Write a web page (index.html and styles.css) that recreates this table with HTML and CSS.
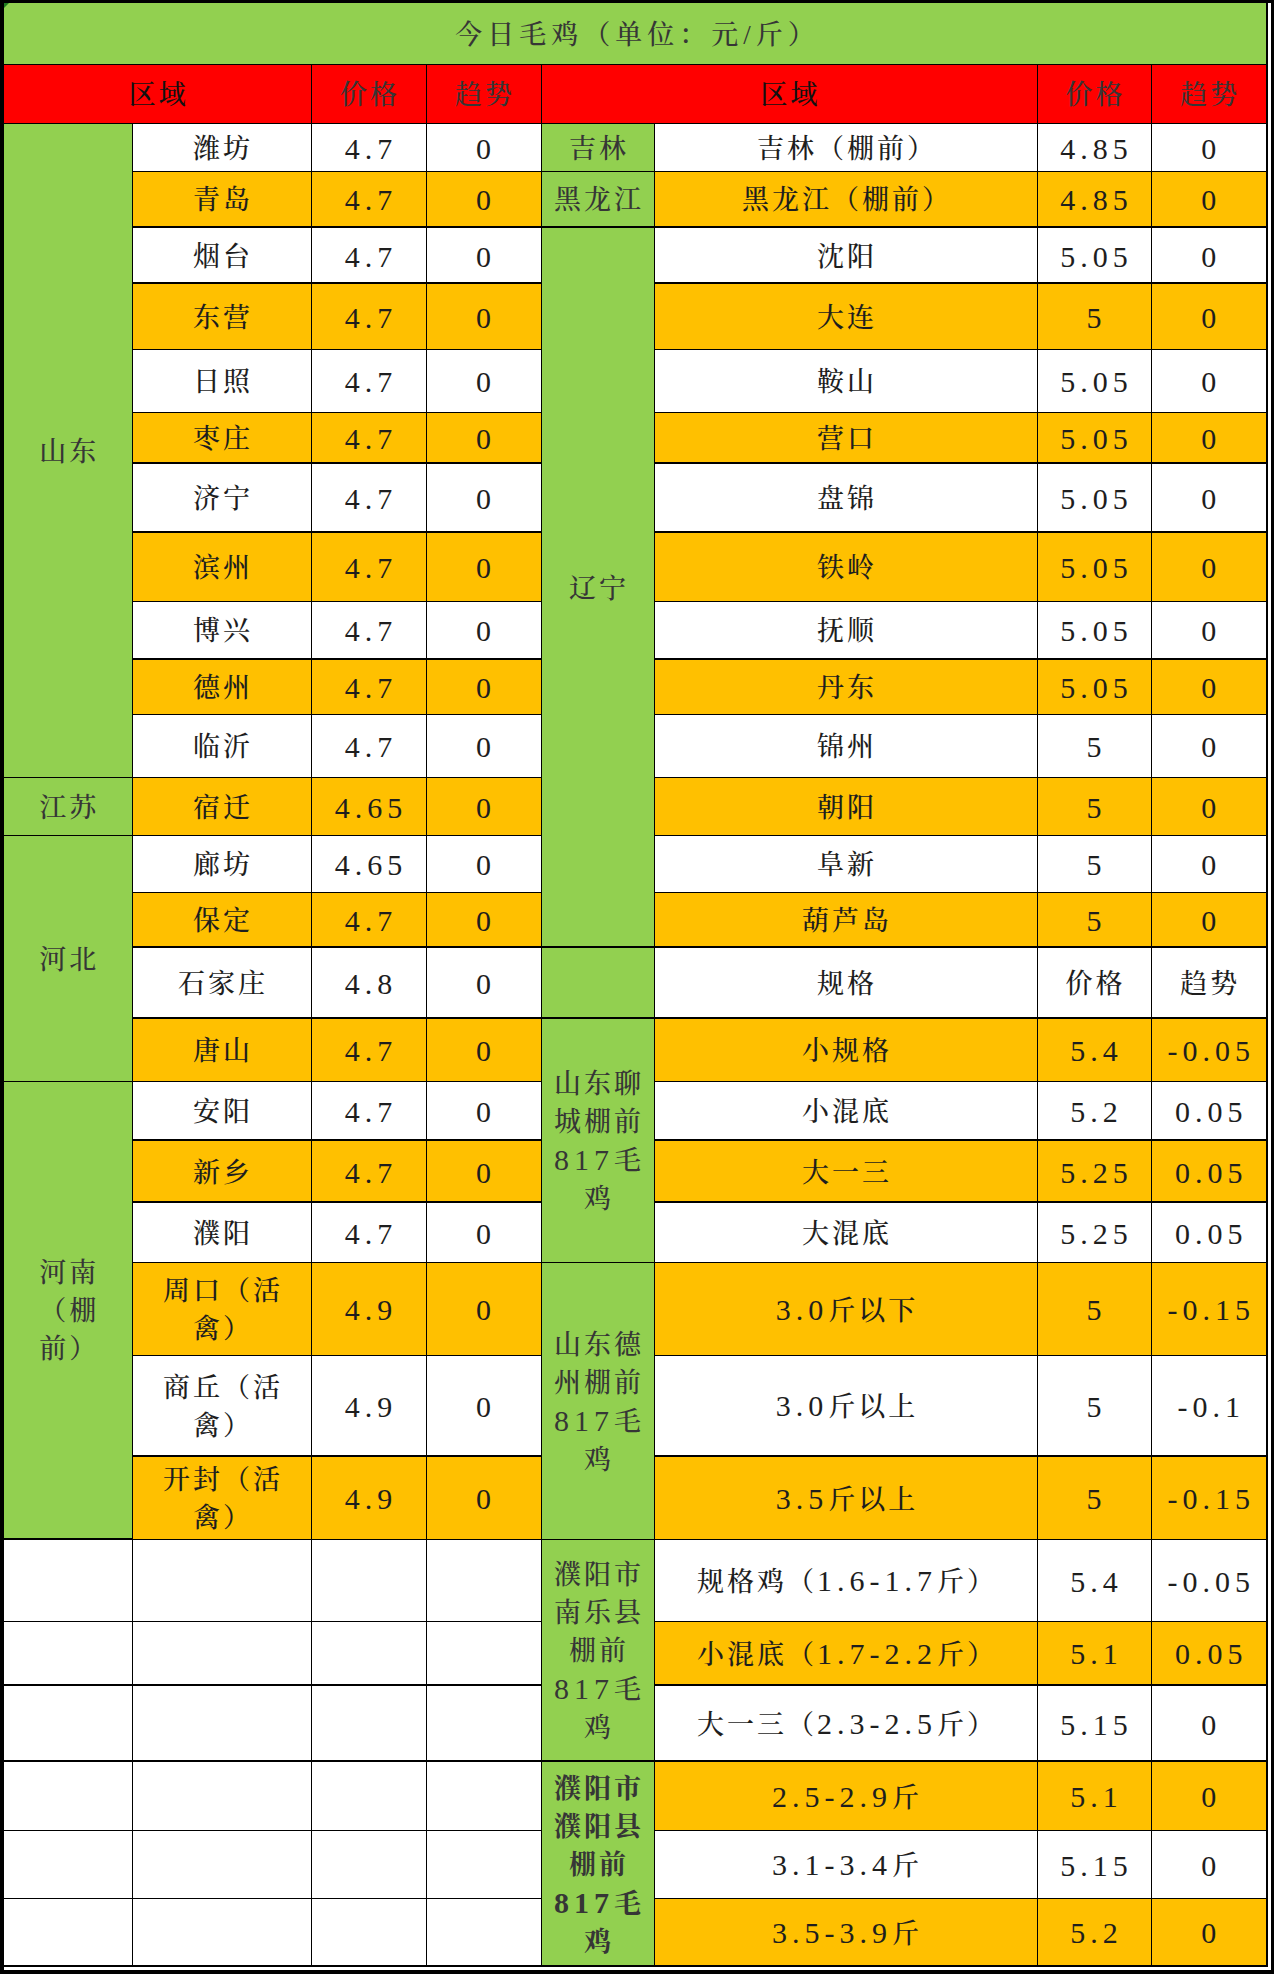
FILE: index.html
```html
<!DOCTYPE html>
<html lang="zh-CN">
<head>
<meta charset="utf-8">
<title>今日毛鸡</title>
<link rel="stylesheet" href="styles.css">
</head>
<body>
<div class="frame">
<table class="sheet">
<colgroup>
<col class="c1"><col class="c2"><col class="c3"><col class="c4"><col class="c5"><col class="c6"><col class="c7"><col class="c8">
</colgroup>
<tbody>
<tr class="h0"><td colspan="8" class="g title"><span class="mark"></span>今日毛鸡（单位：元/斤）</td></tr>
<tr class="h1"><td colspan="2" class="red k">区域</td><td class="red">价格</td><td class="red">趋势</td><td colspan="2" class="red k">区域</td><td class="red">价格</td><td class="red">趋势</td></tr>

<tr class="r1"><td rowspan="11" class="g">山东</td><td>潍坊</td><td class="n">4.7</td><td class="n">0</td><td class="g">吉林</td><td>吉林（棚前）</td><td class="n">4.85</td><td class="n">0</td></tr>
<tr class="r2 o tk"><td>青岛</td><td class="n">4.7</td><td class="n">0</td><td class="g">黑龙江</td><td>黑龙江（棚前）</td><td class="n">4.85</td><td class="n">0</td></tr>
<tr class="r3 tk"><td>烟台</td><td class="n">4.7</td><td class="n">0</td><td rowspan="12" class="g tb">辽宁</td><td>沈阳</td><td class="n">5.05</td><td class="n">0</td></tr>
<tr class="r4 o"><td>东营</td><td class="n">4.7</td><td class="n">0</td><td>大连</td><td class="n">5</td><td class="n">0</td></tr>
<tr class="r5"><td>日照</td><td class="n">4.7</td><td class="n">0</td><td>鞍山</td><td class="n">5.05</td><td class="n">0</td></tr>
<tr class="r6 o tk"><td>枣庄</td><td class="n">4.7</td><td class="n">0</td><td>营口</td><td class="n">5.05</td><td class="n">0</td></tr>
<tr class="r7 tk"><td>济宁</td><td class="n">4.7</td><td class="n">0</td><td>盘锦</td><td class="n">5.05</td><td class="n">0</td></tr>
<tr class="r8 o"><td>滨州</td><td class="n">4.7</td><td class="n">0</td><td>铁岭</td><td class="n">5.05</td><td class="n">0</td></tr>
<tr class="r9 tk"><td>博兴</td><td class="n">4.7</td><td class="n">0</td><td>抚顺</td><td class="n">5.05</td><td class="n">0</td></tr>
<tr class="r10 o"><td>德州</td><td class="n">4.7</td><td class="n">0</td><td>丹东</td><td class="n">5.05</td><td class="n">0</td></tr>
<tr class="r11"><td>临沂</td><td class="n">4.7</td><td class="n">0</td><td>锦州</td><td class="n">5</td><td class="n">0</td></tr>
<tr class="r12 o"><td class="g">江苏</td><td>宿迁</td><td class="n">4.65</td><td class="n">0</td><td>朝阳</td><td class="n">5</td><td class="n">0</td></tr>
<tr class="r13"><td rowspan="4" class="g">河北</td><td>廊坊</td><td class="n">4.65</td><td class="n">0</td><td>阜新</td><td class="n">5</td><td class="n">0</td></tr>
<tr class="r14 o tk"><td>保定</td><td class="n">4.7</td><td class="n">0</td><td>葫芦岛</td><td class="n">5</td><td class="n">0</td></tr>
<tr class="r15 tk"><td>石家庄</td><td class="n">4.8</td><td class="n">0</td><td class="g"></td><td>规格</td><td>价格</td><td>趋势</td></tr>
<tr class="r16 o"><td>唐山</td><td class="n">4.7</td><td class="n">0</td><td rowspan="4" class="g">山东聊<br>城棚前<br><span class="d">817</span>毛<br>鸡</td><td>小规格</td><td class="n">5.4</td><td class="n">-0.05</td></tr>
<tr class="r17 tk"><td rowspan="6" class="g">河南<br>（棚<br>前）</td><td>安阳</td><td class="n">4.7</td><td class="n">0</td><td>小混底</td><td class="n">5.2</td><td class="n">0.05</td></tr>
<tr class="r18 o tk"><td>新乡</td><td class="n">4.7</td><td class="n">0</td><td>大一三</td><td class="n">5.25</td><td class="n">0.05</td></tr>
<tr class="r19"><td>濮阳</td><td class="n">4.7</td><td class="n">0</td><td>大混底</td><td class="n">5.25</td><td class="n">0.05</td></tr>
<tr class="r20 o"><td>周口（活<br>禽）</td><td class="n">4.9</td><td class="n">0</td><td rowspan="3" class="g">山东德<br>州棚前<br><span class="d">817</span>毛<br>鸡</td><td><span class="d">3.0</span>斤以下</td><td class="n">5</td><td class="n">-0.15</td></tr>
<tr class="r21 tk"><td>商丘（活<br>禽）</td><td class="n">4.9</td><td class="n">0</td><td><span class="d">3.0</span>斤以上</td><td class="n">5</td><td class="n">-0.1</td></tr>
<tr class="r22 o"><td>开封（活<br>禽）</td><td class="n">4.9</td><td class="n">0</td><td><span class="d">3.5</span>斤以上</td><td class="n">5</td><td class="n">-0.15</td></tr>
<tr class="r23"><td></td><td></td><td></td><td></td><td rowspan="3" class="g tb">濮阳市<br>南乐县<br>棚前<br><span class="d">817</span>毛<br>鸡</td><td>规格鸡（<span class="d">1.6-1.7</span>斤）</td><td class="n">5.4</td><td class="n">-0.05</td></tr>
<tr class="r24 o tk"><td class="w"></td><td class="w"></td><td class="w"></td><td class="w"></td><td>小混底（<span class="d">1.7-2.2</span>斤）</td><td class="n">5.1</td><td class="n">0.05</td></tr>
<tr class="r25 tk"><td></td><td></td><td></td><td></td><td>大一三（<span class="d">2.3-2.5</span>斤）</td><td class="n">5.15</td><td class="n">0</td></tr>
<tr class="r26 o"><td class="w"></td><td class="w"></td><td class="w"></td><td class="w"></td><td rowspan="3" class="g tb b">濮阳市<br>濮阳县<br>棚前<br><span class="d">817</span>毛<br>鸡</td><td><span class="d">2.5-2.9</span>斤</td><td class="n">5.1</td><td class="n">0</td></tr>
<tr class="r27"><td></td><td></td><td></td><td></td><td><span class="d">3.1-3.4</span>斤</td><td class="n">5.15</td><td class="n">0</td></tr>
<tr class="r28 o tk"><td class="w"></td><td class="w"></td><td class="w"></td><td class="w"></td><td><span class="d">3.5-3.9</span>斤</td><td class="n">5.2</td><td class="n">0</td></tr>
</tbody>
</table>
</div>
</body>
</html>
```
FILE: styles.css
```css
html, body {
  margin: 0;
  padding: 0;
  background: #ffffff;
}

.frame {
  width: 1274px;
  height: 1974px;
  box-sizing: border-box;
  border-style: solid;
  border-color: #000;
  border-width: 3px 3px 4px 4px;
  background: #ffffff;
}

.sheet {
  border-collapse: collapse;
  table-layout: fixed;
  width: 1263px;
  border-top: hidden;
  border-left: hidden;
  border-right: 2px solid #000;
  border-bottom: 2px solid #000;
  font-family: "Liberation Serif", "Noto Serif CJK SC", "Noto Sans CJK SC", serif;
  font-size: 27px;
  font-weight: 500;
  letter-spacing: 3px;
  color: #1e1e1e;
}

.c1 { width: 128px; }
.c2 { width: 179px; }
.c3 { width: 115px; }
.c4 { width: 115px; }
.c5 { width: 113px; }
.c6 { width: 383px; }
.c7 { width: 114px; }
.c8 { width: 116px; }

.sheet td {
  padding: 3px 0 0 3px;
  border: 1px solid #000;
  text-align: center;
  vertical-align: middle;
  line-height: 38px;
  white-space: nowrap;
  overflow: hidden;
  background: #ffffff;
}

.sheet tr.o td { background: #ffc000; }
.sheet tr.tk td { border-bottom-width: 2px; }
.sheet td.tb { border-bottom-width: 2px; }
.sheet tr td.w { background: #ffffff; }
.sheet tr td.g { background: #92d050; color: #363636; }
.sheet td.red { background: #ff0000; color: #363636; }
.sheet td.k { color: #111; }
.sheet td.b { color: #111; font-weight: bold; }

.sheet td.n,
.d {
  font-size: 30px;
  letter-spacing: 5px;
}

.sheet td.n {
  padding-left: 5px;
}

.sheet td.title {
  position: relative;
  color: #111;
  letter-spacing: 5px;
  padding-left: 5px;
  border-bottom-width: 1px;
}

.mark {
  position: absolute;
  left: 0;
  top: 0;
  width: 0;
  height: 0;
  border-top: 5px solid #1f7a1f;
  border-right: 5px solid transparent;
}

.h0 { height: 61px; }
.h1 { height: 59px; }
.r1 { height: 48px; }
.r2 { height: 56px; }
.r3 { height: 56px; }
.r4 { height: 66px; }
.r5 { height: 63px; }
.r6 { height: 51px; }
.r7 { height: 69px; }
.r8 { height: 69px; }
.r9 { height: 58px; }
.r10 { height: 55px; }
.r11 { height: 63px; }
.r12 { height: 58px; }
.r13 { height: 57px; }
.r14 { height: 55px; }
.r15 { height: 71px; }
.r16 { height: 63px; }
.r17 { height: 59px; }
.r18 { height: 62px; }
.r19 { height: 60px; }
.r20 { height: 93px; }
.r21 { height: 101px; }
.r22 { height: 83px; }
.r23 { height: 82px; }
.r24 { height: 64px; }
.r25 { height: 76px; }
.r26 { height: 69px; }
.r27 { height: 68px; }
.r28 { height: 68px; }
```
